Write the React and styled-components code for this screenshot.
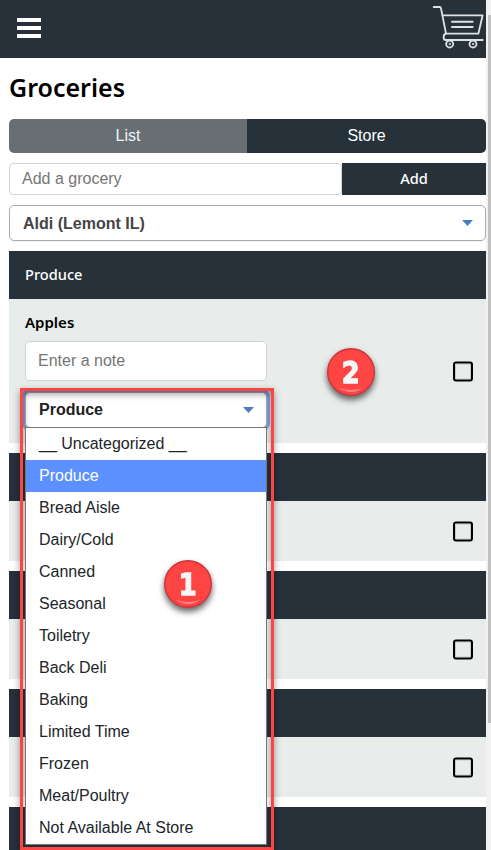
import React from "react";
import styled, { createGlobalStyle } from "styled-components";

const DARK = "#27313a";
const SANS = '"Liberation Sans", Arial, sans-serif';
const HUMANIST = '"Trebuchet MS", "Noto Sans", sans-serif';

const GlobalStyle = createGlobalStyle`
  *, *::before, *::after { box-sizing: border-box; }
  body { margin: 0; background: #fff; overflow: hidden; }
  input, button { font-family: inherit; }
`;

const Screen = styled.div`
  position: relative;
  display: grid;
  grid-template-columns: 1fr 5px;
  width: 491px;
  height: 850px;
  overflow: hidden;
  font: 16px/24px ${SANS};
  color: #212529;
`;

const Page = styled.div`
  height: 850px;
  overflow: hidden;
`;

const ScrollTrack = styled.div`
  padding: 15px 0 0 2px;
  background: #f1f1f1;
`;

const ScrollThumb = styled.div`
  height: 708px;
  background: #c1c1c1;
`;

const Header = styled.header`
  display: flex;
  justify-content: space-between;
  height: 58px;
  padding-left: 17px;
  background: ${DARK};
`;

const MenuButton = styled.button`
  display: flex;
  flex-direction: column;
  gap: 4px;
  width: 24px;
  padding: 18px 0 0;
  border: 0;
  background: none;
`;

const MenuBar = styled.span`
  width: 24px;
  height: 4px;
  background: #fff;
`;

const CartIcon = styled.svg`
  width: 55px;
  height: 58px;
`;

const Main = styled.main`
  display: flex;
  flex-direction: column;
  gap: 10px;
  padding-left: 9px;
`;

const Title = styled.h1`
  height: 51px;
  margin: 0;
  padding-top: 11px;
  font: 600 25px/36px ${HUMANIST};
  color: #000;
`;

const Tabs = styled.div`
  display: grid;
  grid-template-columns: 238px 1fr;
  height: 34px;
  border-radius: 5px;
  overflow: hidden;
`;

const Tab = styled.button`
  padding: 0 0 1px;
  border: 0;
  background: ${(p) => (p.$active ? "#676e74" : DARK)};
  color: ${(p) => (p.$active ? "#f1f2f2" : "#fff")};
  font-size: 16px;
`;

const AddRow = styled.div`
  display: grid;
  grid-template-columns: 333px 1fr;
  height: 32px;
`;

const TextInput = styled.input`
  width: 100%;
  height: ${(p) => p.$height}px;
  padding: 0 12px;
  border: 1px solid #ced4da;
  border-radius: 4px;
  background: #fff;
  font-size: 16px;
  &::placeholder { color: #757575; opacity: 1; }
`;

const AddButton = styled.button`
  padding: 0 0 2px;
  border: 0;
  background: ${DARK};
  color: #fff;
  font: 500 14.6px/24px ${HUMANIST};
`;

const Select = styled.div`
  display: flex;
  align-items: center;
  justify-content: space-between;
  height: 36px;
  padding: 0 12px 0 13px;
  border: 1px solid #aaa;
  border-radius: 5px;
  background: #fff;
  box-shadow: ${(p) => (p.$focused ? "0 0 0 3px #7da2e0" : "0 1px 1px rgba(0, 0, 0, 0.05)")};
  color: ${(p) => (p.$focused ? "#222" : "#444")};
  font-weight: 700;
`;

const SelectLabel = styled.span`
  padding-top: ${(p) => (p.$focused ? 0 : 1)}px;
`;

const Caret = styled.svg`
  width: 11px;
  height: 6px;
`;

const Section = styled.section`
  flex: none;
`;

const SectionHeader = styled.h2`
  height: 48px;
  margin: 0;
  padding: 0 16px;
  background: ${DARK};
  color: #fff;
  font: 500 14.6px/47px ${HUMANIST};
`;

const Item = styled.div`
  display: flex;
  align-items: center;
  justify-content: space-between;
  height: ${(p) => p.$height}px;
  padding: 0 13px 0 16px;
  background: #e8eceb;
`;

const ItemFields = styled.div`
  align-self: start;
  width: 242px;
  padding-top: 12px;
`;

const ItemName = styled.div`
  height: 30px;
  color: #000;
  font: 600 15px/23px ${HUMANIST};
`;

const SelectWrap = styled.div`
  position: relative;
  margin-top: 11px;
`;

const Checkbox = styled.span`
  width: 20px;
  height: 20px;
  margin-left: auto;
  border: 2px solid #000;
  border-radius: 3px;
  box-shadow: inset 0 0 0 1px #c9c7c8;
  transform: translateY(0.5px);
`;

const Options = styled.ul`
  position: absolute;
  z-index: 2;
  top: 35px;
  left: 0;
  width: 242px;
  margin: 0;
  padding: 0;
  border: 1px solid #767676;
  background: #fff;
  list-style: none;
`;

const Option = styled.li`
  height: 32px;
  padding-left: 13px;
  line-height: 31px;
  white-space: pre;
  background: ${(p) => (p.$selected ? "#5c90ff" : "#fff")};
  color: ${(p) => (p.$selected ? "#fff" : "#212529")};
`;

const Highlight = styled.div`
  position: absolute;
  z-index: 1;
  top: -4px;
  left: -5px;
  width: 254px;
  height: 462px;
  border: 3px solid #ff4444;
  box-shadow: 0 3px 7px rgba(0, 0, 0, 0.4), inset 0 3px 7px rgba(0, 0, 0, 0.4);
`;

const Badge = styled.svg`
  position: absolute;
  z-index: 3;
  left: ${(p) => p.$x - 34}px;
  top: ${(p) => p.$y - 34}px;
  width: 68px;
  height: 68px;
  filter: drop-shadow(0 4px 3px rgba(0, 0, 0, 0.6));
`;

const BadgeNumber = styled.text`
  font: 700 30px "DejaVu Sans", sans-serif;
  fill: #f7f7f7;
  stroke: #f7f7f7;
  stroke-width: 1.3px;
  text-anchor: middle;
`;

const options = [
  "__ Uncategorized __", "Produce", "Bread Aisle", "Dairy/Cold", "Canned",
  "Seasonal", "Toiletry", "Back Deli", "Baking", "Limited Time", "Frozen",
  "Meat/Poultry", "Not Available At Store",
];

const Arrow = () => (
  <Caret viewBox="0 0 11 6">
    <path d="M0 0h11L5.5 6z" fill="#4a7fbd" />
  </Caret>
);

const Callout = ({ n, x, y }) => (
  <Badge $x={x} $y={y} viewBox="0 0 68 68">
    <circle cx="34" cy="34" r="23.3" fill="#ff4444" stroke="#c9363b" strokeWidth="1.4" />
    <path d="M22 50Q34 58 46 50Q34 54 22 50Z" fill="#ff8585" />
    <BadgeNumber transform="translate(33.7 45) scale(0.86 1)">{n}</BadgeNumber>
  </Badge>
);

export default function App() {
  return (
    <Screen>
      <GlobalStyle />
      <Page>
        <Header>
          <MenuButton aria-label="Menu">
            <MenuBar /><MenuBar /><MenuBar />
          </MenuButton>
          <CartIcon viewBox="119 -1 165 174" fill="none" stroke="#dfe2e4" strokeWidth="5.5" strokeLinejoin="round" strokeLinecap="round">
            <path d="M127 20h18q3 0 4 4l15 76h97l13-55H153" />
            <path d="M163 100q-7 3-6 12 0 7 7 7h110" />
            <path d="M182 64h62M182 80h62" strokeWidth="6" />
            <circle cx="175" cy="131" r="10.5" />
            <circle cx="245" cy="131" r="10.5" />
            <circle cx="175" cy="131" r="2" strokeWidth="3" />
            <circle cx="245" cy="131" r="2" strokeWidth="3" />
          </CartIcon>
        </Header>
        <Main>
          <Title>Groceries</Title>
          <Tabs>
            <Tab $active>List</Tab>
            <Tab>Store</Tab>
          </Tabs>
          <AddRow>
            <TextInput $height={32} placeholder="Add a grocery" />
            <AddButton>Add</AddButton>
          </AddRow>
          <Select><SelectLabel>Aldi (Lemont IL)</SelectLabel><Arrow /></Select>
          <Section>
            <SectionHeader>Produce</SectionHeader>
            <Item $height={144}>
              <ItemFields>
                <ItemName>Apples</ItemName>
                <TextInput $height={40} placeholder="Enter a note" />
                <SelectWrap>
                  <Select $focused><SelectLabel $focused>Produce</SelectLabel><Arrow /></Select>
                  <Highlight />
                  <Options>
                    {options.map((o) => (
                      <Option key={o} $selected={o === "Produce"}>{o}</Option>
                    ))}
                  </Options>
                </SelectWrap>
              </ItemFields>
              <Checkbox />
            </Item>
          </Section>
          {[1, 2, 3, 4].map((id) => (
            <Section key={id}>
              <SectionHeader />
              <Item $height={60}><Checkbox /></Item>
            </Section>
          ))}
        </Main>
      </Page>
      <ScrollTrack><ScrollThumb /></ScrollTrack>
      <Callout n="1" x={188} y={584} />
      <Callout n="2" x={351} y={372} />
    </Screen>
  );
}
